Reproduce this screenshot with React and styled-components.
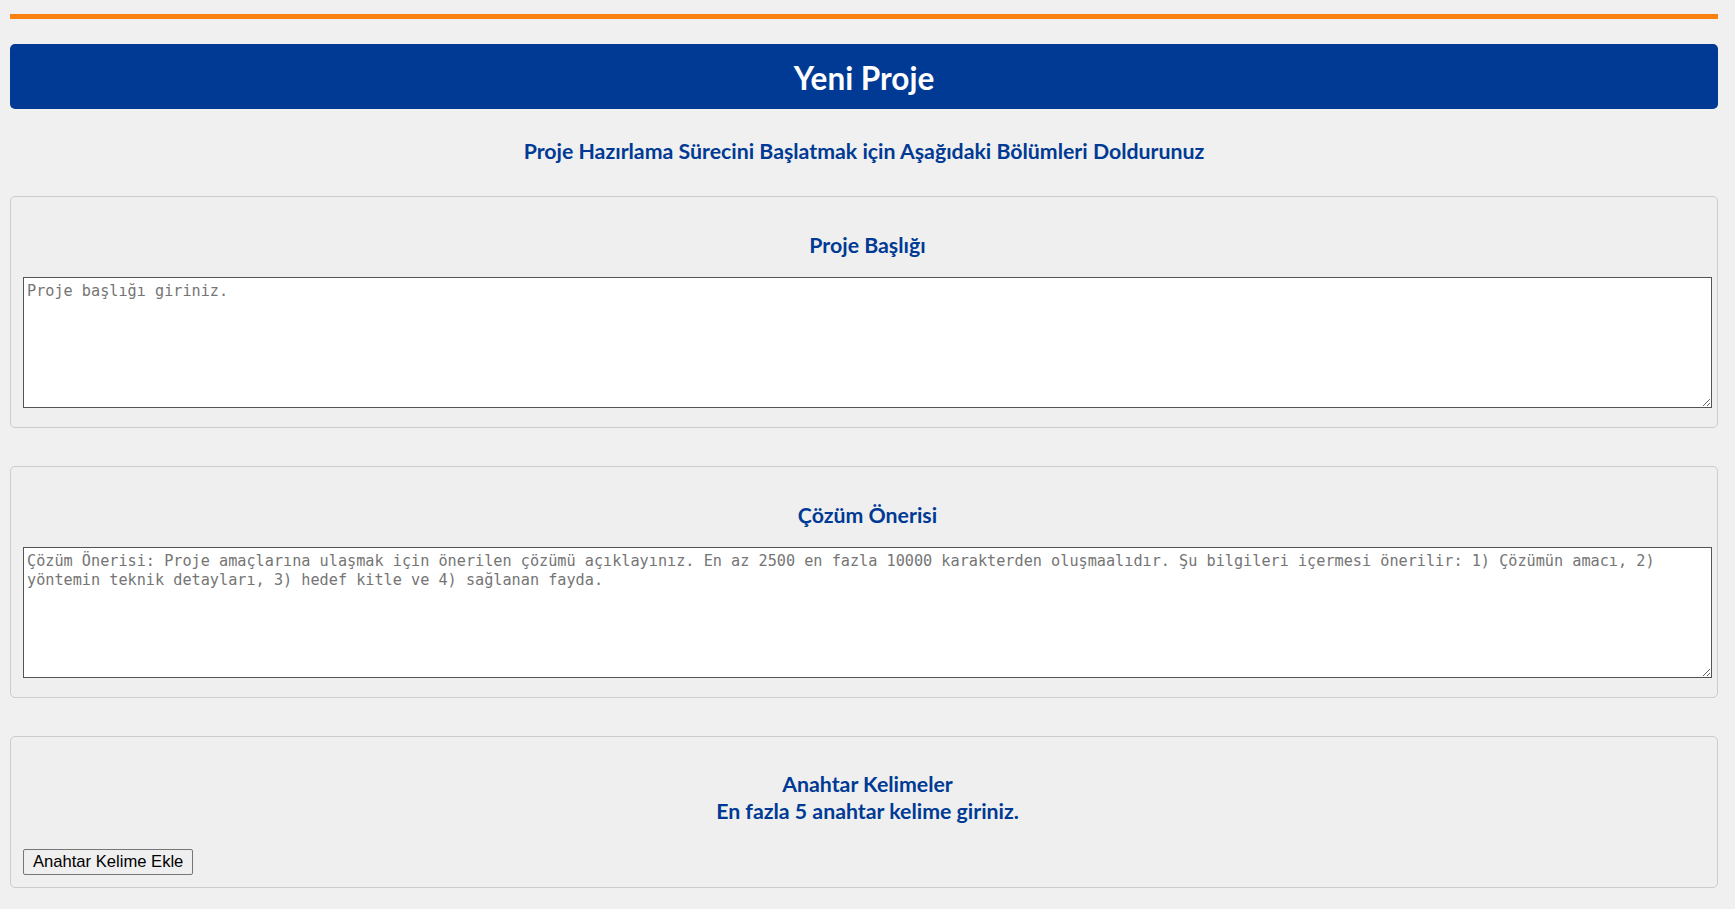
import React from 'react';
import styled, { createGlobalStyle } from 'styled-components';

const GlobalStyle = createGlobalStyle`
    html, body {
        margin: 0;
        padding: 0;
        background: #f0f0f0;
    }
    body {
        font-family: "Lato", "Open Sans", sans-serif;
    }
`;

const Page = styled.div`
    padding: 14px 17px 0 10px;
`;

const TopLine = styled.div`
    height: 5px;
    background: #fb8110;
    margin-bottom: 25px;
`;

const Header = styled.header`
    height: 65px;
    background: #003a94;
    border-radius: 5px;
    display: flex;
    align-items: center;
    justify-content: center;
    h1 {
        margin: 0;
        color: #fff;
        font-size: 31.5px;
        font-weight: 700;
        line-height: 1;
        padding-top: 4px;
    }
`;

const Lead = styled.h2`
    margin: 30px 0 33px;
    text-align: center;
    color: #003a94;
    font-size: 21.3px;
    font-weight: 700;
    line-height: 24px;
`;

const Section = styled.section`
    box-sizing: border-box;
    border: 1px solid #cccccc;
    border-radius: 5px;
    background: #efefef;
    padding: 0 5px ${(p) => p.$bottom || 19}px 12px;
    margin-bottom: 38px;
`;

// başlık iki satır olunca satır aralığı biraz daralıyor
const SectionTitle = styled.h3`
    margin: 34px 0 ${(p) => p.$gap || 18}px;
    text-align: center;
    color: #003a94;
    font-size: 21.3px;
    font-weight: 700;
    line-height: ${(p) => (p.$tight ? 27 : 28)}px;
`;

const Field = styled.textarea`
    display: block;
    box-sizing: border-box;
    width: 100%;
    height: 131px;
    margin: 0;
    padding: 4px 3px 2px;
    border: 1px solid #545454;
    border-radius: 0;
    background: #fff;
    font-family: "DejaVu Sans Mono", "Liberation Mono", monospace;
    font-size: 15.2px;
    line-height: 18.6px;
    color: #222;
    resize: both;
    &::placeholder {
        color: #757575;
    }
`;

const AddButton = styled.button`
    display: block;
    padding: 2px 9px;
    border: 1px solid #767676;
    border-radius: 2px;
    background: #efefef;
    color: #000;
    font-family: "Liberation Sans", Arial, sans-serif;
    font-size: 16.6px;
    line-height: 20px;
    cursor: pointer;
`;

const App = () => {
    return (
        <>
            <GlobalStyle />
            <Page>
                <TopLine />
                <Header>
                    <h1>Yeni Proje</h1>
                </Header>
                <Lead>Proje Hazırlama Sürecini Başlatmak için Aşağıdaki Bölümleri Doldurunuz</Lead>

                <Section>
                    <SectionTitle>Proje Başlığı</SectionTitle>
                    <Field placeholder="Proje başlığı giriniz." />
                </Section>

                <Section>
                    <SectionTitle>Çözüm Önerisi</SectionTitle>
                    <Field placeholder="Çözüm Önerisi: Proje amaçlarına ulaşmak için önerilen çözümü açıklayınız. En az 2500 en fazla 10000 karakterden oluşmaalıdır. Şu bilgileri içermesi önerilir: 1) Çözümün amacı, 2) yöntemin teknik detayları, 3) hedef kitle ve 4) sağlanan fayda." />
                </Section>

                <Section $bottom={12}>
                    <SectionTitle $tight $gap={24}>
                        Anahtar Kelimeler
                        <br />
                        En fazla 5 anahtar kelime giriniz.
                    </SectionTitle>
                    <AddButton type="button">Anahtar Kelime Ekle</AddButton>
                </Section>
            </Page>
        </>
    );
};

export default App;
